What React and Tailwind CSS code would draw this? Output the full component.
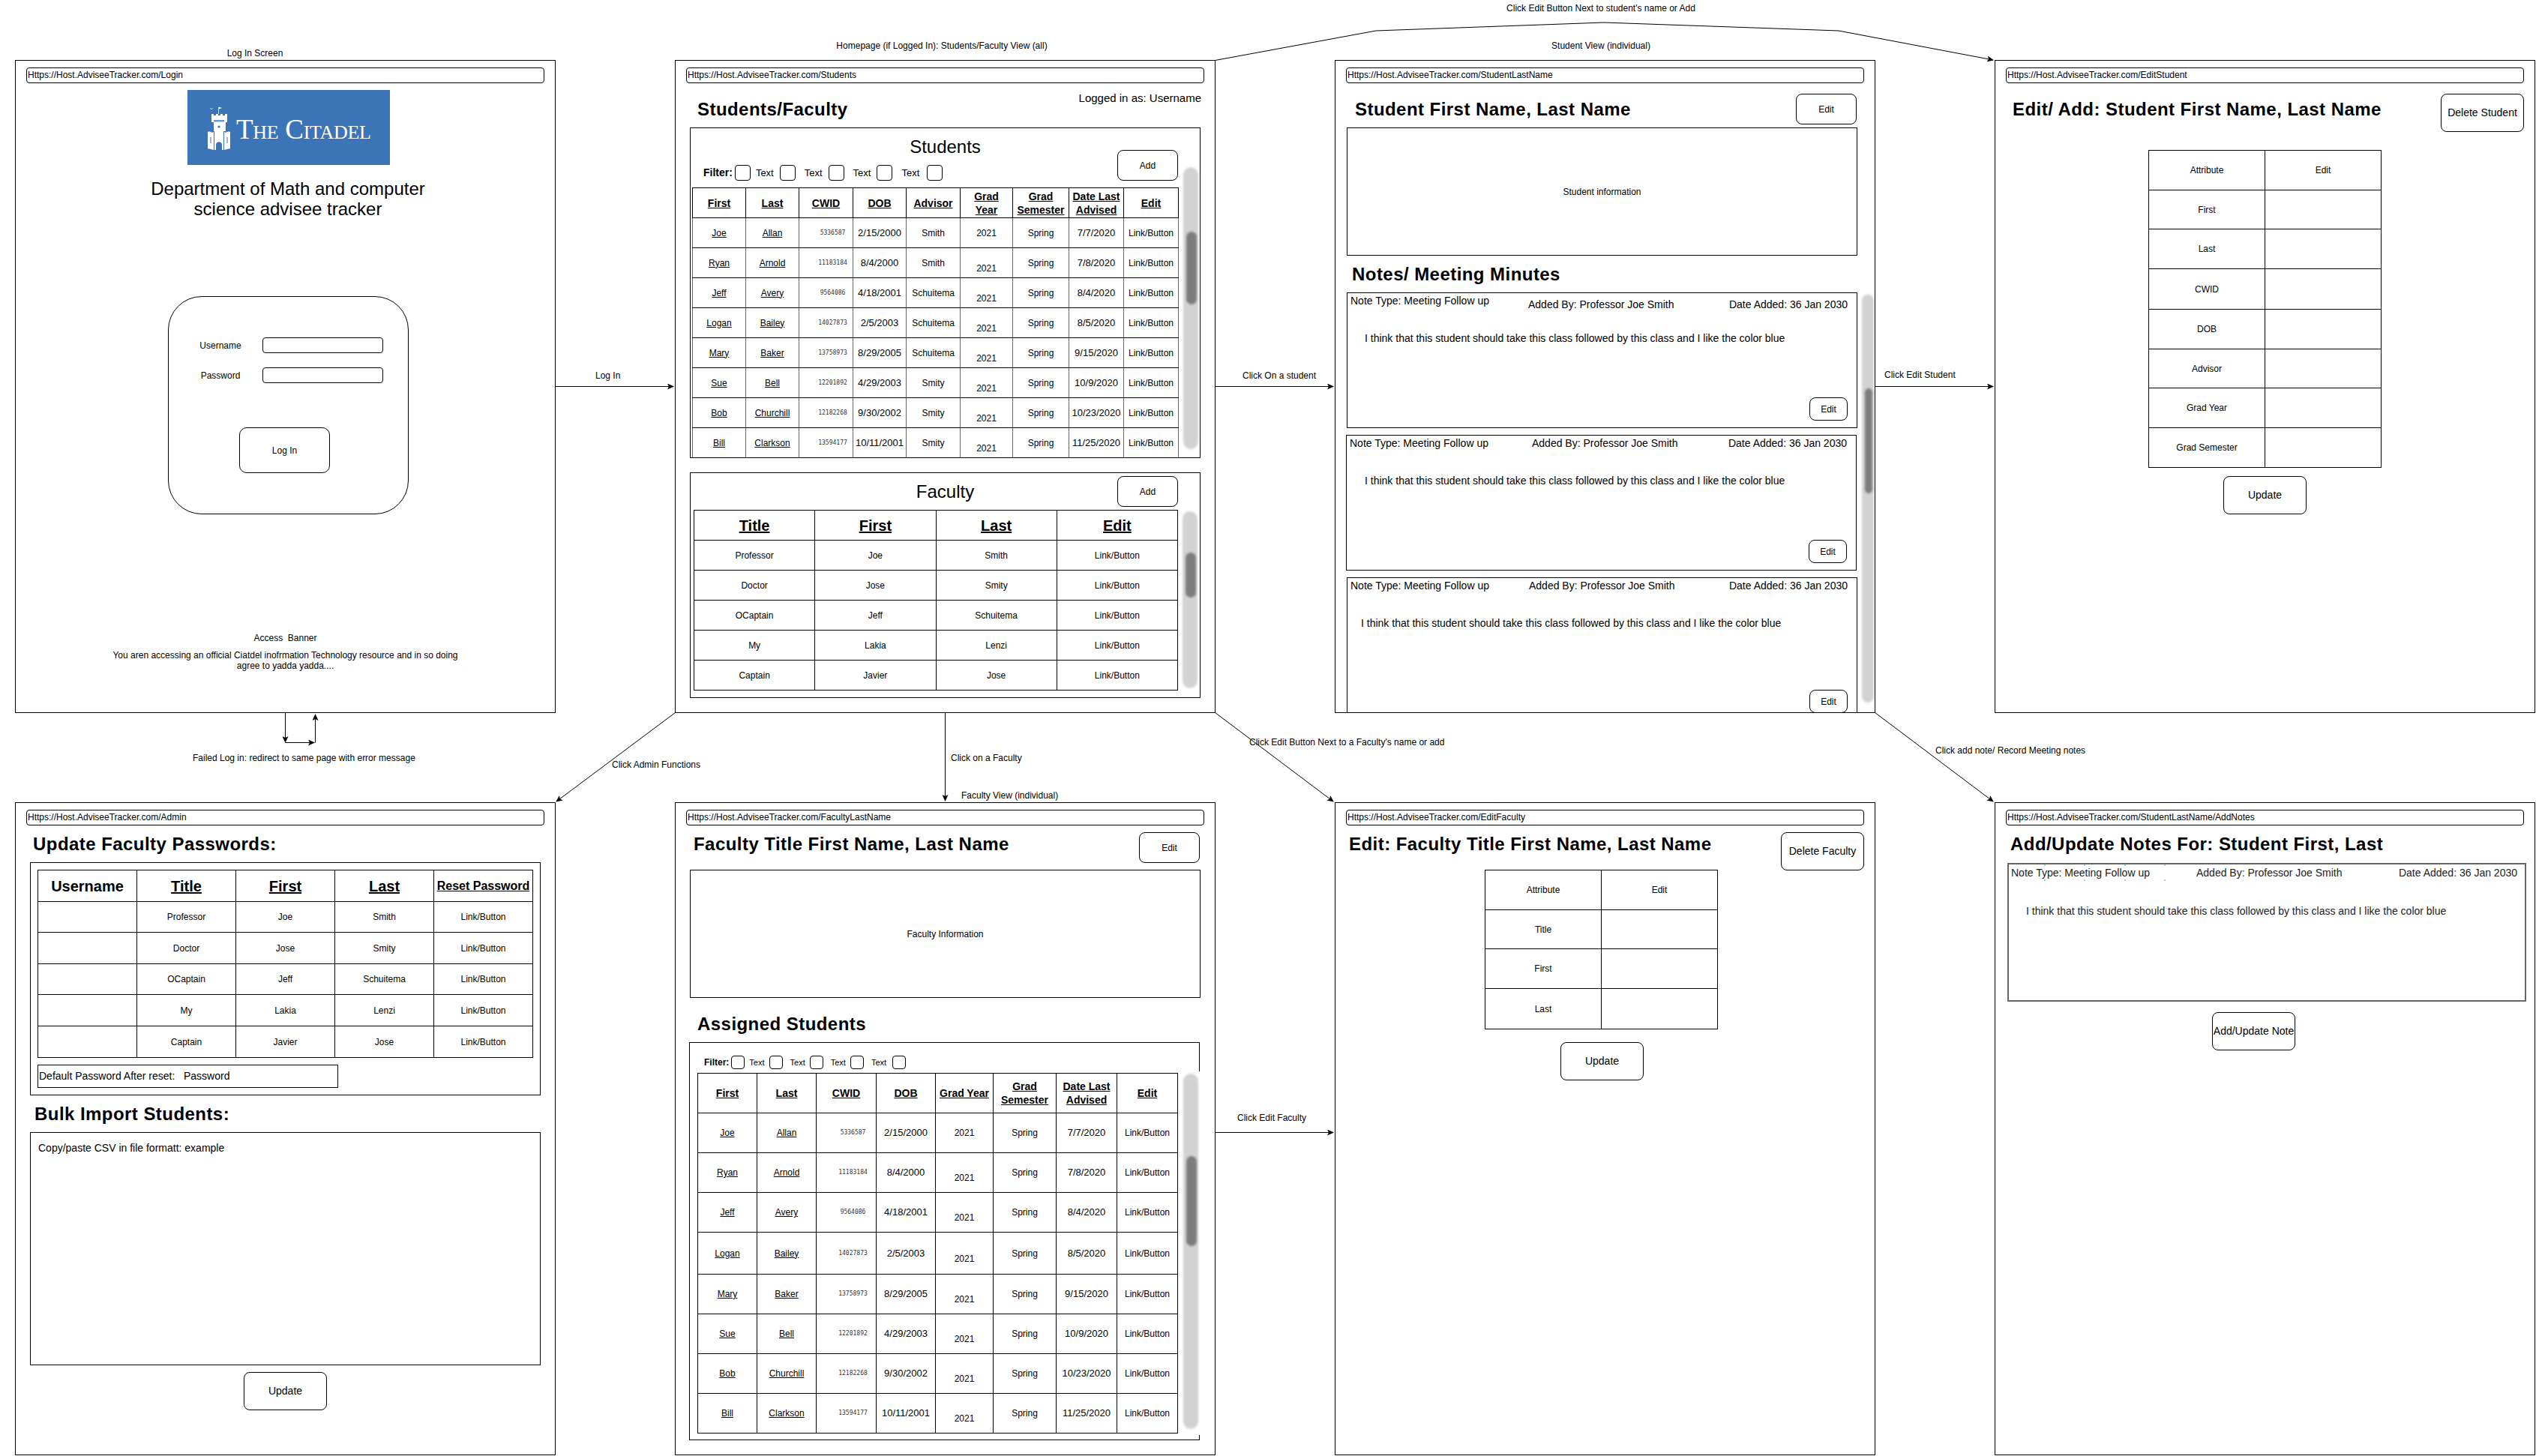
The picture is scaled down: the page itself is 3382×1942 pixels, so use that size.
const STUDENTS = [
  ['Joe', 'Allan', '5336587', '2/15/2000', 'Smith', '7/7/2020'],
  ['Ryan', 'Arnold', '11183184', '8/4/2000', 'Smith', '7/8/2020'],
  ['Jeff', 'Avery', '9564086', '4/18/2001', 'Schuitema', '8/4/2020'],
  ['Logan', 'Bailey', '14027873', '2/5/2003', 'Schuitema', '8/5/2020'],
  ['Mary', 'Baker', '13758973', '8/29/2005', 'Schuitema', '9/15/2020'],
  ['Sue', 'Bell', '12201892', '4/29/2003', 'Smity', '10/9/2020'],
  ['Bob', 'Churchill', '12182268', '9/30/2002', 'Smity', '10/23/2020'],
  ['Bill', 'Clarkson', '13594177', '10/11/2001', 'Smity', '11/25/2020'],
];

const FACULTY = [
  ['Professor', 'Joe', 'Smith'],
  ['Doctor', 'Jose', 'Smity'],
  ['OCaptain', 'Jeff', 'Schuitema'],
  ['My', 'Lakia', 'Lenzi'],
  ['Captain', 'Javier', 'Jose'],
];

const NOTE = 'I think that this student should take this class followed by this class and I like the color blue';

function Window({ className, url, children }) {
  return (
    <div className={`absolute flex flex-col items-start border border-black bg-white pl-[14px] pt-[9px] overflow-hidden w-[721px] h-[871px] ${className}`}>
      <UrlBar url={url} />
      {children}
    </div>
  );
}

function UrlBar({ url }) {
  return (
    <div className="w-[691px] h-[21px] shrink-0 border border-black rounded-[4px] pl-[1px] text-[12px] leading-[19px]">
      {url}
    </div>
  );
}

function Btn({ className, children }) {
  return (
    <button className={`flex shrink-0 items-center justify-center border border-black rounded-[8px] bg-white ${className}`}>
      {children}
    </button>
  );
}

function Heading({ className, children }) {
  return <h2 className={`text-[24px] font-bold tracking-[0.45px] whitespace-nowrap ${className}`}>{children}</h2>;
}

function Scrollbar({ track, thumb }) {
  return (
    <div className={`shrink-0 rounded-full bg-[#d2d2d2] blur-[1.5px] ${track}`}>
      <div className={`rounded-full bg-[#7d7d7d] ${thumb}`} />
    </div>
  );
}

function Filter({ className, label, text, box, gapFirst, gapText, gapBox, gapLast }) {
  const Box = ({ gap }) => <span className={`shrink-0 border border-black rounded-[4px] ${box} ${gap}`} />;
  return (
    <div className={`flex items-center ${className}`}>
      <span className={`font-bold ${label}`}>Filter:</span>
      <Box gap="ml-[3px]" />
      <span className={`${text} ${gapFirst}`}>Text</span>
      <Box gap={gapBox} />
      <span className={`${text} ${gapText}`}>Text</span>
      <Box gap={gapBox} />
      <span className={`${text} ${gapText}`}>Text</span>
      <Box gap={gapBox} />
      <span className={`${text} ${gapText}`}>Text</span>
      <Box gap={gapLast} />
    </div>
  );
}

function StudentRows({ advisor, rowClass, lineClass, tallRow }) {
  return STUDENTS.map((s, i) => (
    <tr key={s[0]} className={i === tallRow ? 'h-[56px]' : rowClass}>
      <td className={`${lineClass} underline`}>{s[0]}</td>
      <td className={`${lineClass} underline`}>{s[1]}</td>
      <td className={`${lineClass} pl-[18px] text-[8px] text-[#333] font-['DejaVu_Sans_Mono',monospace]`}>{s[2]}</td>
      <td className={`${lineClass} text-[13px]`}>{s[3]}</td>
      {advisor && <td className={lineClass}>{s[4]}</td>}
      <td className={`${lineClass} ${i === 0 ? '' : 'pt-[14px]'}`}>2021</td>
      <td className={lineClass}>Spring</td>
      <td className={`${lineClass} text-[13px]`}>{s[5]}</td>
      <td className={lineClass}>Link/Button</td>
    </tr>
  ));
}

function FacultyRows({ rowClass, username }) {
  return FACULTY.map((f, i) => (
    <tr key={f[0]} className={rowClass[i]}>
      {username && <td className="border border-black" />}
      <td className="border border-black">{f[0]}</td>
      <td className="border border-black">{f[1]}</td>
      <td className="border border-black">{f[2]}</td>
      <td className="border border-black">Link/Button</td>
    </tr>
  ));
}

function AttributeTable({ rows }) {
  return (
    <table className="table-fixed border-collapse w-[311px] text-[12px] text-center">
      <tbody>
        {rows.map(([name, rowClass]) => (
          <tr key={name} className={rowClass}>
            <td className="border border-black">{name}</td>
            <td className="border border-black">{name === 'Attribute' ? 'Edit' : ''}</td>
          </tr>
        ))}
      </tbody>
    </table>
  );
}

function NoteCard({ className, typeWidth, addedOffset, bodyPad, buttonGap = 'mt-[71px]' }) {
  return (
    <div className={`flex flex-col shrink-0 border border-black w-[681px] h-[181px] text-[14px] leading-[16px] ${className}`}>
      <div className="flex items-start h-[18px] pl-[4px] pr-[12px] pt-[2px]">
        <span className={typeWidth}>Note Type: Meeting Follow up</span>
        <span className={addedOffset}>Added By: Professor Joe Smith</span>
        <span className={`ml-auto ${addedOffset}`}>Date Added: 36 Jan 2030</span>
      </div>
      <p className={`mt-[34px] ${bodyPad}`}>{NOTE}</p>
      <Btn className={`self-end mr-[12px] w-[51px] h-[31px] text-[12px] rounded-[6px] ${buttonGap}`}>Edit</Btn>
    </div>
  );
}

function LoginWindow() {
  return (
    <Window className="left-[20px] top-[80px]" url="Https://Host.AdviseeTracker.com/Login">
      <div className="flex items-center shrink-0 ml-[215px] mt-[9px] w-[270px] h-[100px] bg-[#3b75b8] pl-[27px] text-white">
        <svg width="30" height="59" viewBox="0 0 30 59" fill="#fff">
          <path d="M14 2h.8v9H14z" />
          <path d="M15 1.500l4 1.500-4 1.500z" />
          <path d="M3 2.500c1 1.800 3 1.800 4 .2-.2 2.600-3.600 2.800-4-.2z" />
          <path d="M5 11h3v2h3v-2h3v2h3v-2h3v2h3v-2h3v11h-2v12h-16v-12h-3z" />
          <path d="M0 35l2.500-1v1.500l2.500-1v1.500l3-1v24l-8-2zM30 35l-2.500-1v1.500l-2.500-1v1.500l-3-1v24l8-2z" />
          <path d="M9 34h12v25h-2v-7c0-5-8-5-8 0v7h-2z" />
          <path d="M8 19h14v2.500h-14z" fill="#3b75b8" opacity=".75" />
          <circle cx="15" cy="28" r="1.600" fill="#3b75b8" />
          <path d="M3.500 42h1v8h-1zM25.500 42h1v8h-1z" fill="#3b75b8" />
        </svg>
        <span className="ml-[8px] pt-[5px] text-[37px] leading-[40px] whitespace-nowrap font-['Liberation_Serif',serif] [font-variant-caps:small-caps] tracking-[-0.3px]">
          The Citadel
        </span>
      </div>
      <h1 className="ml-[129px] mt-[18px] w-[440px] text-center text-[24px] leading-[27px]">
        Department of Math and computer
        <br />
        science advisee tracker
      </h1>
      <div className="ml-[189px] mt-[103px] w-[321px] h-[291px] shrink-0 border border-black rounded-[45px] text-[12px]">
        <div className="flex items-center mt-[54px]">
          <span className="w-[125px] pl-[13px] text-center">Username</span>
          <span className="w-[161px] h-[21px] border border-black rounded-[4px]" />
        </div>
        <div className="flex items-center mt-[19px]">
          <span className="w-[125px] pl-[13px] text-center">Password</span>
          <span className="w-[161px] h-[21px] border border-black rounded-[4px]" />
        </div>
        <Btn className="ml-[94px] mt-[59px] w-[121px] h-[61px] rounded-[10px]">Log In</Btn>
      </div>
      <div className="w-[691px] mt-[158px] text-center text-[12px] leading-[14px]">
        <p className="whitespace-pre">Access  Banner</p>
        <p className="mt-[9px]">
          You aren accessing an official Ciatdel inofrmation Technology resource and in so doing
          <br />
          agree to yadda yadda....
        </p>
      </div>
    </Window>
  );
}

function StudentsWindow() {
  return (
    <Window className="left-[900px] top-[80px]" url="Https://Host.AdviseeTracker.com/Students">
      <div className="flex items-start justify-between w-[691px] h-[59px] shrink-0 pr-[4px]">
        <Heading className="ml-[15px] mt-[21px] leading-[28px]">Students/Faculty</Heading>
        <span className="mt-[12px] text-[15px] leading-[16px]">Logged in as: Username</span>
      </div>
      <section className="ml-[5px] w-[681px] h-[441px] shrink-0 border border-black">
        <h3 className="mt-[11px] text-center text-[24px] leading-[28px]">Students</h3>
        <div className="flex items-start -mt-[10px] h-[50px]">
          <Filter
            className="ml-[17px] mt-[20px]"
            label="text-[14px]"
            text="text-[13px]"
            box="w-[21px] h-[21px]"
            gapFirst="ml-[7px]"
            gapText="ml-[12px]"
            gapBox="ml-[8px]"
            gapLast="ml-[10px]"
          />
          <Btn className="ml-auto mr-[29px] w-[81px] h-[41px] text-[12px]">Add</Btn>
        </div>
        <div className="flex items-start pl-[2px]">
          <table className="table-fixed border-collapse w-[648px] shrink-0 text-[12px] text-center">
            <colgroup>
              <col className="w-[71px]" />
              <col className="w-[71px]" />
              <col className="w-[72px]" />
              <col className="w-[71px]" />
              <col className="w-[72px]" />
              <col className="w-[70px]" />
              <col className="w-[75px]" />
              <col className="w-[73px]" />
              <col className="w-[73px]" />
            </colgroup>
            <thead>
              <tr className="h-[40px] text-[14px] leading-[18px] font-bold underline">
                <th className="border border-black">First</th>
                <th className="border border-black">Last</th>
                <th className="border border-black">CWID</th>
                <th className="border border-black">DOB</th>
                <th className="border border-black">Advisor</th>
                <th className="border border-black">Grad<br />Year</th>
                <th className="border border-black">Grad<br />Semester</th>
                <th className="border border-black">Date Last<br />Advised</th>
                <th className="border border-black">Edit</th>
              </tr>
            </thead>
            <tbody>
              <StudentRows advisor rowClass="h-[40px]" lineClass="border-y border-y-black border-x border-x-[#666]" />
            </tbody>
          </table>
          <Scrollbar track="ml-[6px] -mt-[27px] w-[20px] h-[376px] pt-[86px] pl-[4px]" thumb="w-[14px] h-[97px]" />
        </div>
      </section>
      <section className="ml-[5px] mt-[19px] w-[681px] h-[301px] shrink-0 border border-black">
        <div className="flex items-start h-[49px]">
          <div className="flex-1" />
          <h3 className="mt-[11px] text-[24px] leading-[28px]">Faculty</h3>
          <div className="flex flex-1 justify-end">
            <Btn className="mt-[4px] mr-[29px] w-[81px] h-[41px] text-[12px]">Add</Btn>
          </div>
        </div>
        <div className="flex items-start pl-[4px]">
          <table className="table-fixed border-collapse w-[646px] shrink-0 text-[12px] text-center">
            <thead>
              <tr className="h-[40px] text-[20px] font-bold underline">
                <th className="border border-black">Title</th>
                <th className="border border-black">First</th>
                <th className="border border-black">Last</th>
                <th className="border border-black">Edit</th>
              </tr>
            </thead>
            <tbody>
              <FacultyRows rowClass={['h-[40px]', 'h-[40px]', 'h-[40px]', 'h-[40px]', 'h-[40px]']} />
            </tbody>
          </table>
          <Scrollbar track="ml-[6px] mt-[2px] w-[20px] h-[236px] pt-[55px] pl-[4px]" thumb="w-[14px] h-[60px]" />
        </div>
      </section>
    </Window>
  );
}

function StudentWindow() {
  return (
    <Window className="left-[1780px] top-[80px]" url="Https://Host.AdviseeTracker.com/StudentLastName">
      <div className="flex items-center w-[691px] h-[41px] mt-[14px] shrink-0 pr-[10px]">
        <Heading className="ml-[12px]">Student First Name, Last Name</Heading>
        <Btn className="ml-auto w-[81px] h-[41px] text-[12px]">Edit</Btn>
      </div>
      <div className="flex items-center justify-center ml-[1px] mt-[4px] w-[681px] h-[171px] shrink-0 border border-black text-[12px]">
        Student information
      </div>
      <Heading className="ml-[8px] mt-[11px] leading-[28px]">Notes/ Meeting Minutes</Heading>
      <div className="flex items-start mt-[10px]">
        <div className="flex flex-col gap-[9px] ml-[1px]">
          <NoteCard typeWidth="w-[237px]" addedOffset="mt-[5px]" bodyPad="pl-[23px]" />
          <NoteCard className="-ml-[1px]" typeWidth="w-[243px]" bodyPad="pl-[24px]" />
          <NoteCard typeWidth="w-[238px]" bodyPad="pl-[18px]" buttonGap="mt-[81px]" />
        </div>
        <Scrollbar track="ml-[6px] mt-[3px] w-[16px] h-[544px] pt-[125px] pl-[4px]" thumb="w-[10px] h-[140px]" />
      </div>
    </Window>
  );
}

function EditStudentWindow() {
  const rows = [
    ['Attribute', 'h-[53px]'],
    ['First', 'h-[52px]'],
    ['Last', 'h-[53px]'],
    ['CWID', 'h-[54px]'],
    ['DOB', 'h-[53px]'],
    ['Advisor', 'h-[52px]'],
    ['Grad Year', 'h-[53px]'],
    ['Grad Semester', 'h-[53px]'],
  ];
  return (
    <Window className="left-[2660px] top-[80px]" url="Https://Host.AdviseeTracker.com/EditStudent">
      <div className="flex items-start w-[691px] mt-[14px] shrink-0">
        <Heading className="ml-[9px] leading-[42px]">Edit/ Add: Student First Name, Last Name</Heading>
        <Btn className="ml-auto w-[111px] h-[51px] text-[14px]">Delete Student</Btn>
      </div>
      <div className="ml-[190px] mt-[24px]">
        <AttributeTable rows={rows} />
      </div>
      <Btn className="ml-[290px] mt-[11px] w-[111px] h-[51px] text-[14px]">Update</Btn>
    </Window>
  );
}

function AdminWindow() {
  return (
    <Window className="left-[20px] top-[1070px]" url="Https://Host.AdviseeTracker.com/Admin">
      <Heading className="ml-[9px] mt-[11px] leading-[28px]">Update Faculty Passwords:</Heading>
      <section className="ml-[5px] mt-[10px] w-[681px] h-[311px] shrink-0 border border-black pl-[9px] pt-[9px]">
        <table className="table-fixed border-collapse w-[661px] text-[12px] text-center">
          <thead>
            <tr className="h-[42px] font-bold">
              <th className="border border-black text-[20px]">Username</th>
              <th className="border border-black text-[20px] underline">Title</th>
              <th className="border border-black text-[20px] underline">First</th>
              <th className="border border-black text-[20px] underline">Last</th>
              <th className="border border-black text-[16px] underline">Reset Password</th>
            </tr>
          </thead>
          <tbody>
            <FacultyRows username rowClass={['h-[41px]', 'h-[42px]', 'h-[41px]', 'h-[42px]', 'h-[42px]']} />
          </tbody>
        </table>
        <div className="mt-[9px] w-[401px] h-[31px] border border-black pl-[1px] text-[14px] leading-[29px] whitespace-pre">
          Default Password After reset:   Password
        </div>
      </section>
      <Heading className="ml-[11px] mt-[11px] leading-[28px]">Bulk Import Students:</Heading>
      <div className="ml-[5px] mt-[10px] w-[681px] h-[311px] shrink-0 border border-black pl-[10px] pt-[12px] text-[14px] leading-[16px]">
        Copy/paste CSV in file formatt: example
      </div>
      <Btn className="ml-[290px] mt-[9px] w-[111px] h-[51px] text-[14px]">Update</Btn>
    </Window>
  );
}

function FacultyWindow() {
  return (
    <Window className="left-[900px] top-[1070px]" url="Https://Host.AdviseeTracker.com/FacultyLastName">
      <div className="flex items-start w-[691px] mt-[9px] shrink-0 pr-[6px]">
        <Heading className="ml-[10px] leading-[32px]">Faculty Title First Name, Last Name</Heading>
        <Btn className="ml-auto w-[81px] h-[41px] text-[12px]">Edit</Btn>
      </div>
      <div className="flex items-center justify-center ml-[5px] mt-[9px] w-[681px] h-[171px] shrink-0 border border-black text-[12px]">
        Faculty Information
      </div>
      <Heading className="ml-[15px] mt-[21px] leading-[28px]">Assigned Students</Heading>
      <section className="ml-[4px] mt-[10px] w-[681px] h-[531px] shrink-0 border border-black">
        <Filter
          className="ml-[19px] mt-[17px] h-[18px]"
          label="text-[12px]"
          text="text-[11px]"
          box="w-[18px] h-[18px]"
          gapFirst="ml-[6px]"
          gapText="ml-[10px]"
          gapBox="ml-[6px]"
          gapLast="ml-[8px]"
        />
        <div className="flex items-start pl-[10px] mt-[5px]">
          <table className="table-fixed border-collapse w-[640px] shrink-0 text-[12px] text-center">
            <colgroup>
              <col className="w-[79px]" />
              <col className="w-[79px]" />
              <col className="w-[80px]" />
              <col className="w-[79px]" />
              <col className="w-[77px]" />
              <col className="w-[84px]" />
              <col className="w-[81px]" />
              <col className="w-[81px]" />
            </colgroup>
            <thead>
              <tr className="h-[53px] text-[14px] leading-[18px] font-bold underline">
                <th className="border border-black">First</th>
                <th className="border border-black">Last</th>
                <th className="border border-black">CWID</th>
                <th className="border border-black">DOB</th>
                <th className="border border-black">Grad Year</th>
                <th className="border border-black">Grad<br />Semester</th>
                <th className="border border-black">Date Last<br />Advised</th>
                <th className="border border-black">Edit</th>
              </tr>
            </thead>
            <tbody>
              <StudentRows rowClass="h-[53px]" tallRow={3} lineClass="border border-black" />
            </tbody>
          </table>
          <div className="shrink-0 -mr-[1px] -mt-[2px] w-[30px] h-[485px] bg-white pl-[7px] pt-[3px]">
            <Scrollbar track="w-[20px] h-[474px] pt-[110px] pl-[4px]" thumb="w-[14px] h-[120px]" />
          </div>
        </div>
      </section>
    </Window>
  );
}

function EditFacultyWindow() {
  const rows = [
    ['Attribute', 'h-[53px]'],
    ['Title', 'h-[52px]'],
    ['First', 'h-[53px]'],
    ['Last', 'h-[54px]'],
  ];
  return (
    <Window className="left-[1780px] top-[1070px]" url="Https://Host.AdviseeTracker.com/EditFaculty">
      <div className="flex items-start w-[691px] mt-[9px] shrink-0">
        <Heading className="ml-[4px] leading-[32px]">Edit: Faculty Title First Name, Last Name</Heading>
        <Btn className="ml-auto w-[111px] h-[51px] text-[14px]">Delete Faculty</Btn>
      </div>
      <div className="ml-[185px] -mt-[1px]">
        <AttributeTable rows={rows} />
      </div>
      <Btn className="ml-[286px] mt-[17px] w-[111px] h-[51px] text-[14px]">Update</Btn>
    </Window>
  );
}

// selection handles left on the note text box in the drawing
function SelectionDots() {
  const xs = ['left-[47px]', 'left-[100px]', 'left-[154px]', 'left-[207px]'];
  return xs.map((x) => (
    <span key={x}>
      <span className={`absolute top-0 w-[2px] h-[2px] bg-[#8bd8f5] ${x}`} />
      <span className={`absolute top-[20px] w-[2px] h-[2px] bg-[#8bd8f5] ${x}`} />
    </span>
  ));
}

function AddNotesWindow() {
  return (
    <Window className="left-[2660px] top-[1070px]" url="Https://Host.AdviseeTracker.com/StudentLastName/AddNotes">
      <Heading className="ml-[6px] mt-[9px] leading-[32px]">Add/Update Notes For: Student First, Last</Heading>
      <div className="relative ml-[2px] mt-[9px] w-[692px] h-[185px] shrink-0 border-2 border-[#666] text-[14px] leading-[16px] text-[#222]">
        <SelectionDots />
        <div className="flex pl-[3px] pr-[10px] pt-[3px]">
          <span className="w-[247px]">Note Type: Meeting Follow up</span>
          <span>Added By: Professor Joe Smith</span>
          <span className="ml-auto">Date Added: 36 Jan 2030</span>
        </div>
        <p className="mt-[35px] pl-[23px]">{NOTE}</p>
      </div>
      <Btn className="ml-[275px] mt-[14px] w-[111px] h-[51px] text-[14px]">Add/Update Note</Btn>
    </Window>
  );
}

function Connectors() {
  const lines = [
    'M740.500 515.500H898',
    'M1620.500 515.500H1778',
    'M2500.500 515.500H2658',
    'M1620.500 1510.500H1778',
    'M1260.500 950.500V1068',
    'M900.500 950.500L742 1069',
    'M1620.500 950.500L1778 1069',
    'M2500.500 950.500L2658 1069',
    'M1620.500 80.500L1835 41L2139 30L2452 41L2658 80',
    'M380.500 950.500V990',
    'M380.500 990.500H419',
    'M420.500 990.500V953',
  ];
  return (
    <svg className="absolute inset-0" width="3382" height="1942" fill="none" stroke="#000">
      <defs>
        <marker id="arrow" markerWidth="9" markerHeight="8" refX="8" refY="4" orient="auto" markerUnits="userSpaceOnUse">
          <path d="M0 0L9 4L0 8L2 4z" fill="#000" stroke="none" />
        </marker>
      </defs>
      {lines.map((d) => (
        <path key={d} d={d} markerEnd="url(#arrow)" />
      ))}
    </svg>
  );
}

function Label({ className, children }) {
  return <span className={`absolute text-[12px] leading-[14px] whitespace-nowrap ${className}`}>{children}</span>;
}

export default function App() {
  return (
    <div className="relative w-[3382px] h-[1942px] overflow-hidden bg-white text-black font-['Liberation_Sans',Arial,sans-serif]">
      <Connectors />
      <LoginWindow />
      <StudentsWindow />
      <StudentWindow />
      <EditStudentWindow />
      <AdminWindow />
      <FacultyWindow />
      <EditFacultyWindow />
      <AddNotesWindow />

      <Label className="left-[340px] top-[64px] -translate-x-1/2">Log In Screen</Label>
      <Label className="left-[1256px] top-[54px] -translate-x-1/2">Homepage (if Logged In): Students/Faculty View (all)</Label>
      <Label className="left-[2135px] top-[54px] -translate-x-1/2">Student View (individual)</Label>
      <Label className="left-[2135px] top-[4px] -translate-x-1/2">Click Edit Button Next to student's name or Add</Label>
      <Label className="left-[794px] top-[494px]">Log In</Label>
      <Label className="left-[1657px] top-[494px]">Click On a student</Label>
      <Label className="left-[2513px] top-[493px]">Click Edit Student</Label>
      <Label className="left-[257px] top-[1004px]">Failed Log in: redirect to same page with error message</Label>
      <Label className="left-[816px] top-[1013px]">Click Admin Functions</Label>
      <Label className="left-[1268px] top-[1004px]">Click on a Faculty</Label>
      <Label className="left-[1282px] top-[1054px]">Faculty View (individual)</Label>
      <Label className="left-[1666px] top-[983px]">Click Edit Button Next to a Faculty's name or add</Label>
      <Label className="left-[2581px] top-[994px]">Click add note/ Record Meeting notes</Label>
      <Label className="left-[1650px] top-[1484px]">Click Edit Faculty</Label>
    </div>
  );
}
